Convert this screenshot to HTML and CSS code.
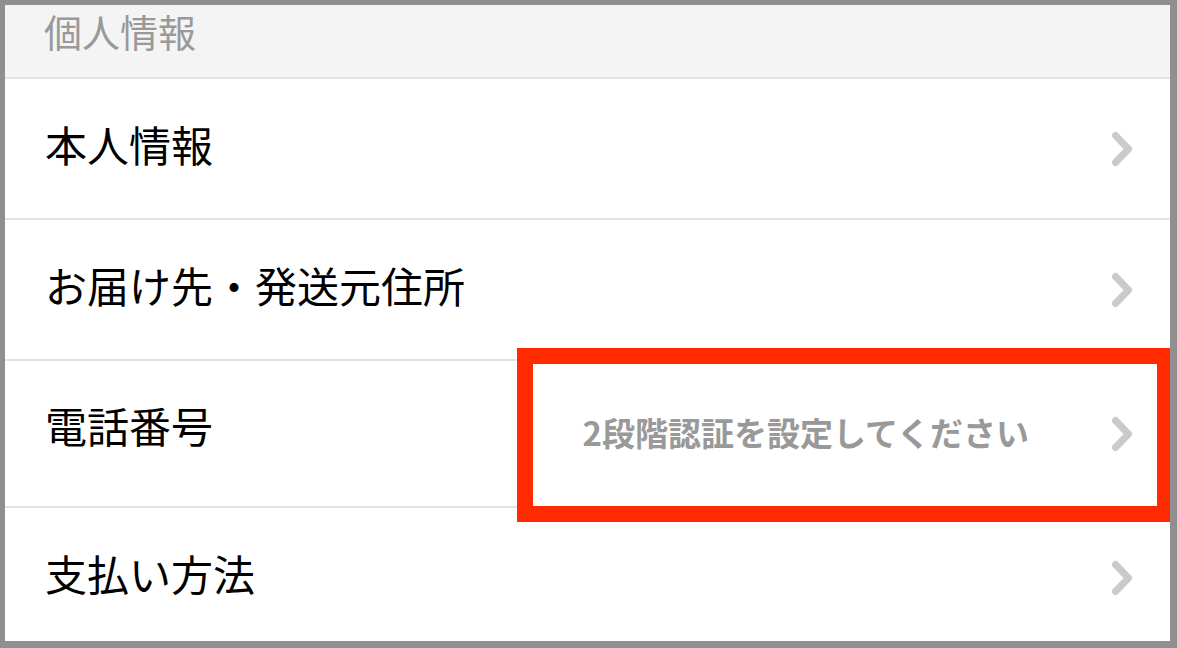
FILE: index.html
```html
<!DOCTYPE html>
<html lang="ja">
<head>
  <meta charset="UTF-8">
  <meta name="viewport" content="width=device-width, initial-scale=1.0">
  <title>個人情報</title>
  <link rel="stylesheet" href="styles.css">
</head>
<body>
  <article class="panel">
    <h2 class="section-head">個人情報</h2>

    <ul class="menu">
      <li class="menu-row row-1">
        <span class="label">本人情報</span>
        <svg class="chevron" viewBox="0 0 22 36"><polyline points="4.5,4.5 17.5,18 4.5,31.5"/></svg>
      </li>
      <li class="menu-row row-2">
        <span class="label">お届け先・発送元住所</span>
        <svg class="chevron" viewBox="0 0 22 36"><polyline points="4.5,4.5 17.5,18 4.5,31.5"/></svg>
      </li>
      <li class="menu-row row-3">
        <span class="label label-up">電話番号</span>
        <span class="value">2段階認証を設定してください</span>
        <svg class="chevron" viewBox="0 0 22 36"><polyline points="4.5,4.5 17.5,18 4.5,31.5"/></svg>
        <div class="highlight"></div>
      </li>
      <li class="menu-row row-4">
        <span class="label">支払い方法</span>
        <svg class="chevron" viewBox="0 0 22 36"><polyline points="4.5,4.5 17.5,18 4.5,31.5"/></svg>
      </li>
    </ul>
  </article>
</body>
</html>
```

FILE: styles.css
```css
html,
body {
  margin: 0;
  height: 648px;
  overflow: hidden;
}

body {
  box-sizing: border-box;
  padding: 5px 7px 7px 5px;
  background-color: #8f8f8f;
  font-family: "Noto Sans CJK JP", "Noto Sans", sans-serif;
}

.panel {
  height: 100%;
  background-color: #fff;
  overflow: hidden;
}

.section-head {
  margin: 0;
  height: 74px;
  padding: 4px 0 0 39px;
  box-sizing: border-box;
  background-color: #f4f4f4;
  border-bottom: 2px solid #e3e3e3;
  font-size: 38px;
  font-weight: 400;
  line-height: 44px;
  color: #999;
}

.menu {
  list-style: none;
  margin: 0;
  padding: 0;
}

.menu-row {
  position: relative;
  display: flex;
  align-items: center;
  padding-left: 40px;
  border-bottom: 2px solid #e3e3e3;
}

.row-1 { height: 139px; }
.row-2 { height: 139px; }
.row-3 { height: 145px; }
.row-4 { height: 140px; border-bottom: none; }

.label {
  margin-top: -10px;
  font-size: 42px;
  color: #000;
  line-height: 1;
}

.label-up {
  margin-top: -18px;
}

.value {
  margin-left: auto;
  margin-right: 82px;
  margin-top: -4px;
  font-size: 33px;
  font-weight: 700;
  color: #999;
}

.chevron {
  width: 22px;
  height: 36px;
  margin-left: auto;
  margin-right: 37px;
  fill: none;
  stroke: #cacaca;
  stroke-width: 7;
  stroke-linecap: round;
  stroke-linejoin: round;
}

.value + .chevron {
  margin-left: 0;
}

.highlight {
  position: absolute;
  top: -13px;
  bottom: -16px;
  left: 512px;
  right: 0;
  border: 16px solid #ff2a00;
  border-right-width: 13px;
  pointer-events: none;
  z-index: 1;
}
```
